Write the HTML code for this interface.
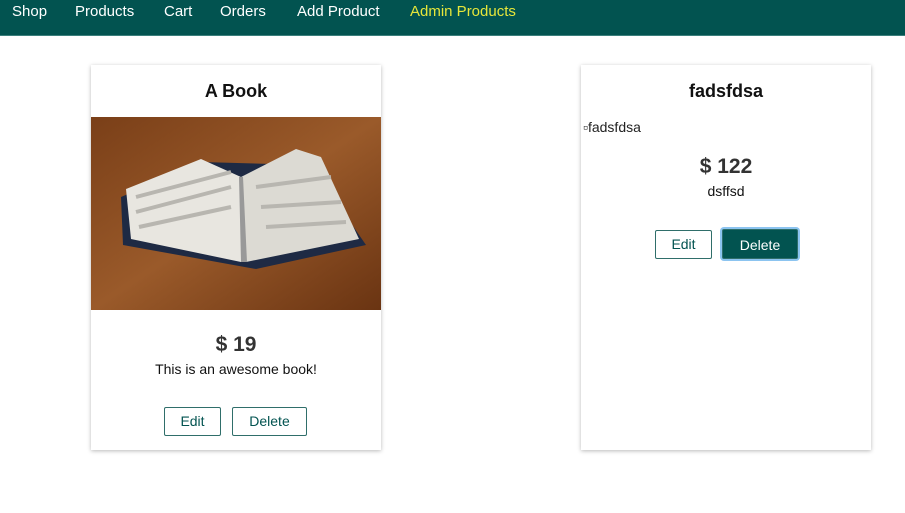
<!DOCTYPE html>
<html><head><style>
body{margin:0;width:905px;height:513px;background:#fff;font-family:"Liberation Sans",sans-serif;position:relative;overflow:hidden}
.nav{position:absolute;left:0;top:0;width:905px;height:35px;background:#025350;border-bottom:1px solid #3a7f7c}
.nav span{position:absolute;top:3px;font-size:15px;color:#fff}
.card{position:absolute;top:65px;width:290px;height:385px;background:#fff;box-shadow:0 1px 4px rgba(0,0,0,.28)}
.t{position:absolute;width:100%;text-align:center;font-weight:bold;font-size:18px;color:#111}
.p{position:absolute;width:100%;text-align:center;font-weight:bold;font-size:21px;color:#333}
.d{position:absolute;width:100%;text-align:center;font-size:14px;color:#111}
.b{position:absolute;border:1px solid #2f6e6a;border-radius:2px;color:#025350;font-size:14px;text-align:center;line-height:27px;box-sizing:border-box;height:29px}
</style></head><body>
<div class="nav">
<span style="left:12px">Shop</span><span style="left:75px">Products</span><span style="left:164px">Cart</span><span style="left:220px">Orders</span><span style="left:297px">Add Product</span><span style="left:410px;color:#e6e63a">Admin Products</span>
</div>
<div class="card" style="left:91px">
<div class="t" style="top:16px">A Book</div>
<svg style="position:absolute;left:0;top:52px" width="290" height="193">
<defs><linearGradient id="w" x1="0" y1="0" x2="1" y2="1"><stop offset="0" stop-color="#7a3f18"/><stop offset=".5" stop-color="#9a5a2a"/><stop offset="1" stop-color="#6a3412"/></linearGradient></defs>
<rect width="290" height="193" fill="url(#w)"/>
<polygon points="30,80 110,45 220,48 275,128 165,152 32,128" fill="#1e2a44"/>
<polygon points="35,72 110,42 150,60 150,145 40,122" fill="#e8e6e0"/>
<polygon points="150,60 205,32 230,40 268,122 155,145" fill="#dcdad3"/>
<path d="M45 80 L140 55 M45 95 L140 70 M48 110 L140 90 M165 70 L240 60 M170 90 L250 85 M175 110 L255 105" stroke="#b8b6b0" stroke-width="4"/>
<polygon points="148,60 152,60 156,145 150,145" fill="#999"/>
</svg>
<div class="p" style="top:268px">$ 19</div>
<div class="d" style="top:296px">This is an awesome book!</div>
<div class="b" style="left:73px;top:342px;width:57px">Edit</div>
<div class="b" style="left:141px;top:342px;width:75px">Delete</div>
</div>
<div class="card" style="left:581px">
<div class="t" style="top:16px">fadsfdsa</div>
<div style="position:absolute;left:2px;top:54px;font-size:14px;color:#222">▫fadsfdsa</div>
<div class="p" style="top:90px">$ 122</div>
<div class="d" style="top:118px">dsffsd</div>
<div class="b" style="left:74px;top:165px;width:57px">Edit</div>
<div class="b" style="left:141px;top:164px;width:76px;background:#025350;color:#fff;box-shadow:0 0 0 2px #8cc4f0;height:30px;line-height:30px">Delete</div>
</div>
</body></html>
